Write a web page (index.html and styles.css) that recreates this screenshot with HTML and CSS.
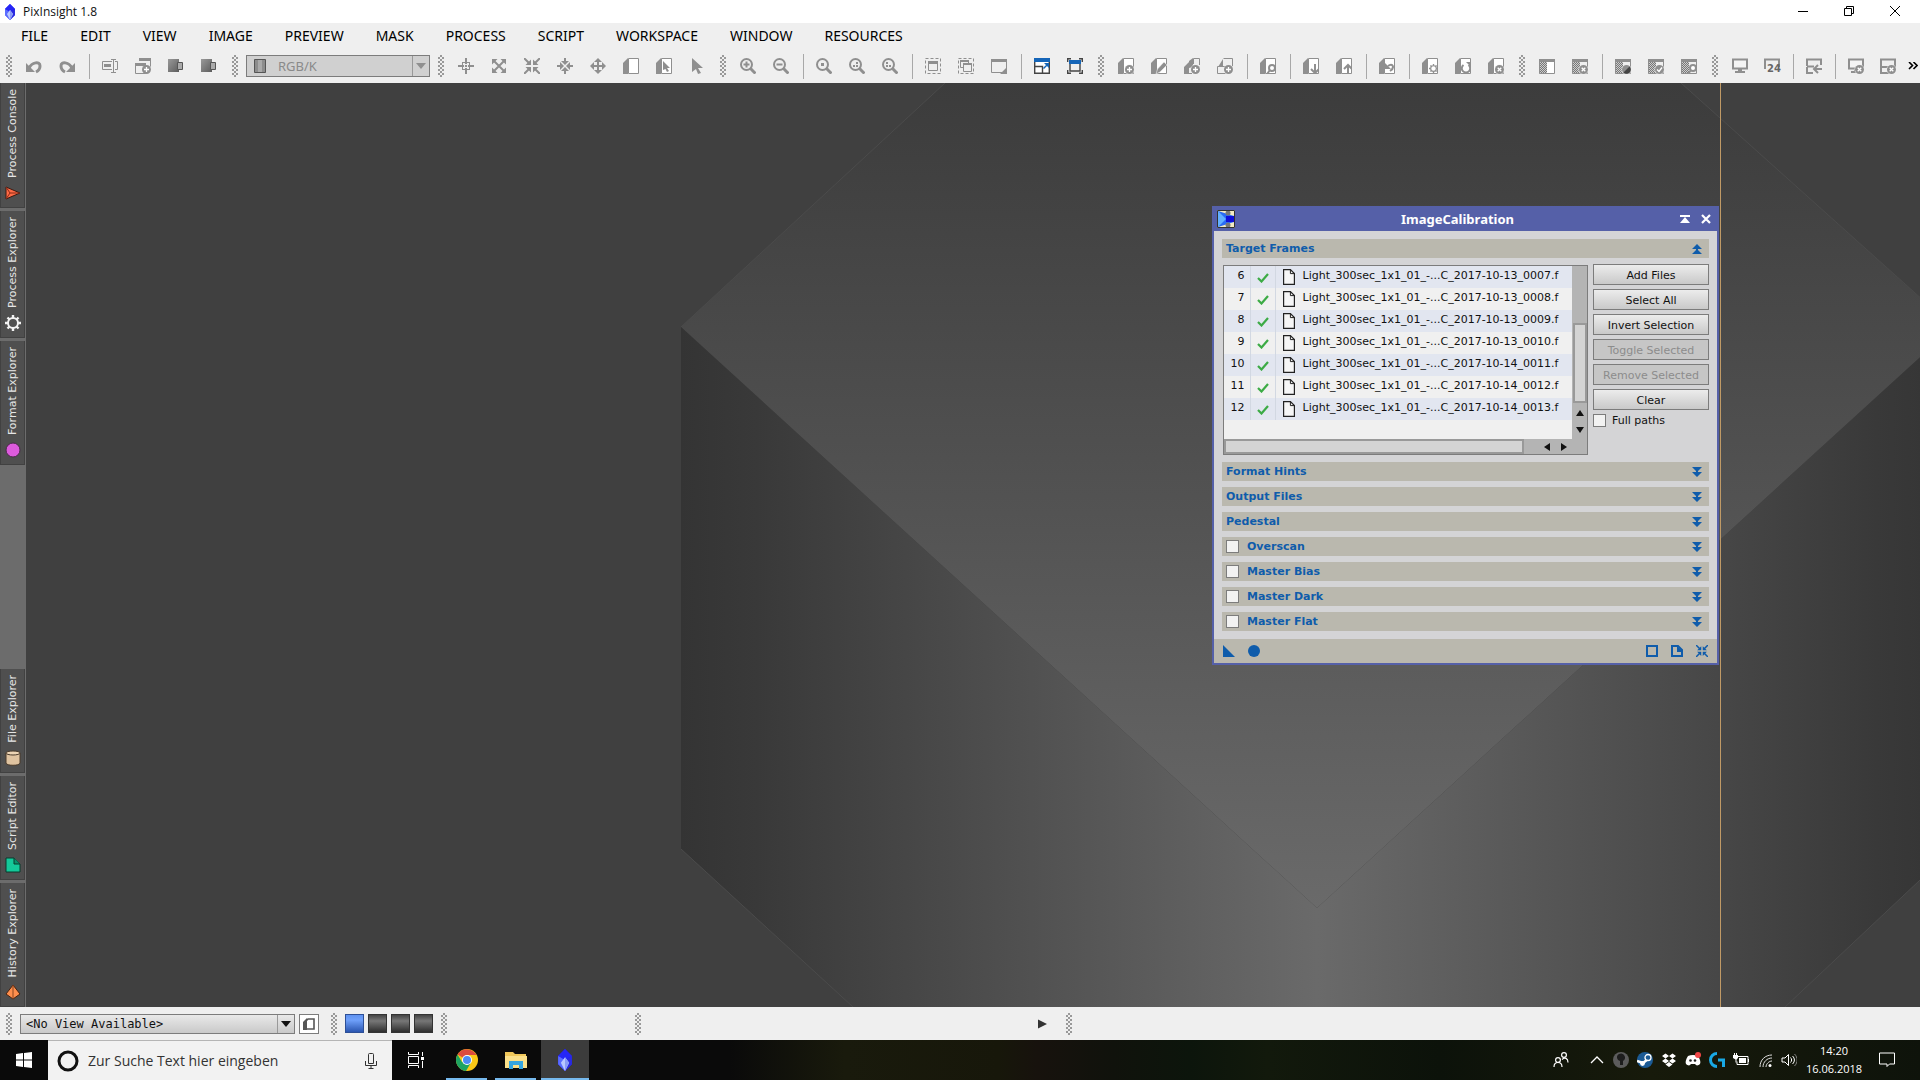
FILE: index.html
```html
<!DOCTYPE html>
<html lang="en">
<head>
  <meta charset="UTF-8" />
  <meta name="viewport" content="width=device-width, initial-scale=1.0"/>
  <title>PixInsight 1.8</title>
  <link rel="stylesheet" href="styles.css">
</head>
<body>

<!-- Icon set -->
<svg class="defs" aria-hidden="true">
  <symbol id="gem" viewBox="0 0 16 16"><path d="M8 0l5 5v6l-5 5-5-5V5z" fill="#1a1aff"/><path d="M8 0l5 5-5 3-5-3z" fill="#2626f5"/><path d="M3 5l5 3v8l-5-5z" fill="#5a6cff"/><path d="M13 5L8 8v8l5-5z" fill="#2a2ae0"/><path d="M8 6l3 4-3 6-3-6z" fill="#b9c8ff"/><path d="M8 6v10l3-6z" fill="#8a9cf5"/></symbol>
  <symbol id="undo" viewBox="0 0 16 16"><path d="M0 5v9h9z"/><path d="M3 10C6 4 14 3 14 8c0 3-2 5-4 6" class="ln3"/></symbol>
  <symbol id="redo" viewBox="0 0 16 16"><path d="M16 5v9H7z"/><path d="M13 10C10 4 2 3 2 8c0 3 2 5 4 6" class="ln3"/></symbol>
  <symbol id="rename" viewBox="0 0 16 16"><path d="M10 3.500H.5v8H10M13 3.500h2.500v8H13M9 1.500h5M9 14.500h5M11.500 1.500v13" class="ln"/><path d="M2 6h7v3H2z"/></symbol>
  <symbol id="newwin" viewBox="0 0 16 16"><path d="M4.500.5h11v8M.5 5.500h10v10H.5z" class="ln"/><path d="M4 0h12v3H4zM0 5h11v3H0z"/><circle cx="11.500" cy="11.500" r="4.500"/><path d="M11.500 9v5M9 11.500h5" class="wh"/></symbol>
  <symbol id="swap" viewBox="0 0 16 16"><path d="M0 1h11v13H0z" fill="url(#darkside)"/><path d="M9.500 4.500h5v7h-5z" fill="#aaa" stroke="#555"/></symbol>
  <symbol id="cross" viewBox="0 0 16 16"><path d="M8 0v6M8 10v6M0 8h6M10 8h6" class="ln2"/><rect x="4.500" y="4.500" width="7" height="7" class="ln"/><path d="M7 7h2v2H7z"/></symbol>
  <symbol id="expand" viewBox="0 0 16 16"><path d="M1 1h5.500L1 6.500zM15 1v5.500L9.500 1zM1 15V9.500L6.500 15zM15 15H9.500L15 9.500z"/><path d="M2 2l12 12M14 2L2 14" class="ln2"/></symbol>
  <symbol id="shrink" viewBox="0 0 16 16"><path d="M7 7H1.500L7 1.500zM9 7V1.500L14.500 7zM7 9v5.500L1.500 9zM9 9h5.500L9 14.500z"/><path d="M0 0l6 6M16 0l-6 6M0 16l6-6M16 16l-6-6" class="ln2"/></symbol>
  <symbol id="inward" viewBox="0 0 16 16"><path d="M8 7L4 3h8zM8 9l-4 4h8zM7 8L3 4v8zM9 8l4-4v8z"/><path d="M8 0v4M8 12v4M0 8h4M12 8h4" class="ln2"/></symbol>
  <symbol id="outward" viewBox="0 0 16 16"><path d="M8 0l4 4H4zM8 16l-4-4h8zM0 8l4-4v8zM16 8l-4 4V4z"/><path d="M8 3v10M3 8h10" class="ln2"/></symbol>
  <symbol id="page" viewBox="0 0 16 16"><path d="M0 16V5l5-5v16z"/><path d="M5.500.5h10v15h-10z" fill="#fff" stroke="currentColor"/></symbol>
  <symbol id="cursor" viewBox="0 0 16 16"><path d="M3 0l11 10H9l3 5-3 1-2-5-4 3z"/></symbol>
  <symbol id="pagecursor" viewBox="0 0 16 16"><use href="#page"/><path d="M7 3l7 7h-3l2 3-2 1-1.500-3L7 12z"/></symbol>
  <symbol id="lens" viewBox="0 0 16 16"><circle cx="6.500" cy="6.500" r="5.500" class="ln2"/><path d="M10.500 10.500l5 5" class="ln3"/></symbol>
  <symbol id="zoomin" viewBox="0 0 16 16"><use href="#lens"/><path d="M6.500 3.500v6M3.500 6.500h6" class="ln2"/></symbol>
  <symbol id="zoomout" viewBox="0 0 16 16"><use href="#lens"/><path d="M3.500 6.500h6" class="ln2"/></symbol>
  <symbol id="zoom1" viewBox="0 0 16 16"><use href="#lens"/><path d="M5 5h3v3H5z"/></symbol>
  <symbol id="zoom2" viewBox="0 0 16 16"><use href="#lens"/><path d="M7 4h2v2H7zM4 7h2v2H4zM7 7h2v2H7z"/></symbol>
  <symbol id="zoom3" viewBox="0 0 16 16"><use href="#lens"/><path d="M4 4h2v2H4zM4 7h2v2H4zM7 7h2v2H7z"/></symbol>
  <symbol id="selwin" viewBox="0 0 16 16"><rect x=".5" y=".5" width="15" height="15" class="dash"/><path d="M3.500 4.500h9v8h-9z" class="ln"/><path d="M3 3h10v3H3z"/></symbol>
  <symbol id="selwins" viewBox="0 0 16 16"><rect x=".5" y=".5" width="15" height="15" class="dash"/><path d="M10.500 5V2.500h-8v7H5M5.500 5.500h8v8h-8z" class="ln"/><path d="M2 2h9v2H2zM5 5h9v2H5z"/></symbol>
  <symbol id="winarrow" viewBox="0 0 16 16"><path d="M.5 1.500h15v13H.5z" class="ln"/><path d="M0 1h16v3H0zM16 9v7H9z"/></symbol>
  <symbol id="fitwin" viewBox="0 0 16 16"><path d="M.7 1h14.600v14.300H.7zM1 8.500h7.500V15" fill="#fff" stroke="#444" stroke-width="1.400"/><path d="M0 0h16v4H0zM10 5h5v5zM9 10l4-4 1 1-4 4z" fill="#1565b8"/></symbol>
  <symbol id="fitscreen" viewBox="0 0 16 16"><path d="M.7 4V.7H4M12 .7h3.300V4M.7 12v3.300H4M12 15.300h3.300V12M3 3h10v10H3z" fill="none" stroke="#444" stroke-width="1.400"/><path d="M2 2h12v4H2z" fill="#1565b8"/></symbol>
  <symbol id="badge" viewBox="0 0 16 16"><circle cx="11.500" cy="11.500" r="5" fill="#efefef"/><circle cx="11.500" cy="11.500" r="4.500"/></symbol>
  <symbol id="pageadd" viewBox="0 0 16 16"><use href="#page"/><use href="#badge"/><path d="M11.500 9v5M9 11.500h5" class="wh"/></symbol>
  <symbol id="pageedit" viewBox="0 0 16 16"><use href="#page"/><path d="M5 16l1.500-5L13 4l3 3-7 7z" stroke="#efefef" stroke-width=".6"/></symbol>
  <symbol id="pagesadd" viewBox="0 0 16 16"><path d="M0 16V9l5-5v12zM5 10V3l4-3v9z"/><path d="M15.500 7V.5h-6V6M5 15.500h3" class="ln"/><use href="#badge"/><path d="M11.500 9v5M9 11.500h5" class="wh"/></symbol>
  <symbol id="stackadd" viewBox="0 0 16 16"><path d="M1 9l5-8v8z"/><path d="M6.500.5h9V8M.5 8.500h8v7h-8z" class="ln"/><use href="#badge"/><path d="M11.500 9v5M9 11.500h5" class="wh"/></symbol>
  <symbol id="pagefind" viewBox="0 0 16 16"><use href="#page"/><circle cx="12" cy="10" r="3" fill="#fff" stroke="currentColor" stroke-width="2"/><path d="M10 12l-3 4" class="ln2"/></symbol>
  <symbol id="pagedown" viewBox="0 0 16 16"><use href="#page"/><path d="M12 6v9M8 11l4 4 4-4" class="ln2"/></symbol>
  <symbol id="pageup" viewBox="0 0 16 16"><use href="#page"/><path d="M12 16V7M8 11l4-4 4 4" class="ln2"/></symbol>
  <symbol id="pageundo" viewBox="0 0 16 16"><use href="#page"/><path d="M9 8c5-4 7 2 2 5" class="ln2"/><path d="M6 5v6h6z"/></symbol>
  <symbol id="gear" viewBox="0 0 16 16"><circle cx="8" cy="8" r="5" fill="none" stroke="currentColor" stroke-width="2"/><path d="M8 0v3M8 13v3M0 8h3M13 8h3M2.500 2.500l2 2M11.500 11.500l2 2M13.500 2.500l-2 2M4.500 11.500l-2 2" stroke="currentColor" stroke-width="2.400"/></symbol>
  <symbol id="pagegear" viewBox="0 0 16 16"><use href="#page"/><use href="#gear" x="7" y="6" width="9" height="9"/></symbol>
  <symbol id="pagereload" viewBox="0 0 16 16"><use href="#page"/><path d="M8.500 7a4.200 4.200 0 1 0 5 0" class="ln2"/><path d="M11 4h5v5z"/></symbol>
  <symbol id="pagedel" viewBox="0 0 16 16"><use href="#page"/><use href="#badge"/><path d="M9.700 9.700l3.600 3.600M13.300 9.700l-3.600 3.600" class="wh"/></symbol>
  <symbol id="mask" viewBox="0 0 16 16"><path d="M0 1h16v3H0z"/><path d="M0 4h8v12H0z" fill="url(#checks)"/><path d="M.5 1.500h15v14H.5z" class="ln"/></symbol>
  <symbol id="maskhalf" viewBox="0 0 16 16"><path d="M1 4h14v11H1z" fill="#fff"/><use href="#mask"/></symbol>
  <symbol id="maskdel" viewBox="0 0 16 16"><use href="#mask"/><use href="#badge"/><path d="M9.700 9.700l3.600 3.600M13.300 9.700l-3.600 3.600" class="wh"/></symbol>
  <symbol id="maskinv" viewBox="0 0 16 16"><use href="#mask"/><use href="#badge"/><path d="M8.500 14.500l6-6a4.200 4.200 0 0 1-6 6z" fill="#444"/></symbol>
  <symbol id="maskok" viewBox="0 0 16 16"><use href="#mask"/><use href="#badge"/><path d="M9 11.500l2 2 3-4" class="wh"/></symbol>
  <symbol id="maskfind" viewBox="0 0 16 16"><use href="#mask"/><circle cx="12" cy="10" r="3" fill="#fff" stroke="currentColor" stroke-width="2"/><path d="M10 12l-3 4" class="ln2"/></symbol>
  <symbol id="screen" viewBox="0 0 16 16"><path d="M1 1.500h14v9H1z" fill="#f4f4f4" stroke="currentColor" stroke-width="2"/><path d="M6 11h4v3H6zM3 13h10v2H3z"/></symbol>
  <symbol id="scrback" viewBox="0 0 16 16"><path d="M1 8V1.500h14V7M1 8.500h7M1 9v6h6M16 11H9M12 7l-4 4 4 4" class="ln2"/></symbol>
  <symbol id="scrdel" viewBox="0 0 16 16"><use href="#screen"/><use href="#badge"/><path d="M9.700 9.700l3.600 3.600M13.300 9.700l-3.600 3.600" class="wh"/></symbol>
  <symbol id="windel" viewBox="0 0 16 16"><path d="M1 8V1.500h14V9M1 9h7v6H1z" class="ln2"/><use href="#badge"/><path d="M9.700 9.700l3.600 3.600M13.300 9.700l-3.600 3.600" class="wh"/></symbol>
  <symbol id="down2" viewBox="0 0 10 10"><path d="M0 0h10L5 5zM0 5h10l-5 5z"/><path d="M4 4h2v2H4z"/></symbol>
  <symbol id="up2" viewBox="0 0 10 10"><path d="M0 5h10L5 0zM0 10h10L5 5z"/><path d="M4 4h2v2H4z"/></symbol>
  <symbol id="tick" viewBox="0 0 12 10"><path d="M1 5l3.500 3.500L11 1" fill="none" stroke="#3cab45" stroke-width="2.200"/></symbol>
  <symbol id="file" viewBox="0 0 12 16"><path d="M.6.600h6.800l4 4v10.800H.6z" fill="#f6f6f6" stroke="#222" stroke-width="1.200"/><path d="M7.400.6v4h4" fill="none" stroke="#222"/></symbol>
  <linearGradient id="darkside" x1="0" y1="0" x2="1" y2="1"><stop offset="0" stop-color="#9a9a9a"/><stop offset="1" stop-color="#5c5c5c"/></linearGradient>
  <pattern id="checks" width="2" height="2" patternUnits="userSpaceOnUse"><path d="M0 0h2v2H0z" fill="#ccc"/><path d="M0 0h1v1H0zM1 1h1v1H1z" fill="#777"/></pattern>
</svg>

<header class="titlebar">
  <svg class="app-icon"><use href="#gem"/></svg>
  <h1>PixInsight 1.8</h1>
  <div class="window-buttons">
    <button aria-label="Minimize"><svg viewBox="0 0 10 10"><path d="M0 5.500h10"/></svg></button>
    <button aria-label="Restore"><svg viewBox="0 0 10 10"><path d="M.5 2.500h7v7h-7zM2.500 2V.5h7v7H8"/></svg></button>
    <button aria-label="Close"><svg viewBox="0 0 10 10"><path d="M0 0l10 10M10 0L0 10"/></svg></button>
  </div>
</header>

<nav class="menu">
  <a href="#">FILE</a>
  <a href="#">EDIT</a>
  <a href="#">VIEW</a>
  <a href="#">IMAGE</a>
  <a href="#">PREVIEW</a>
  <a href="#">MASK</a>
  <a href="#">PROCESS</a>
  <a href="#">SCRIPT</a>
  <a href="#">WORKSPACE</a>
  <a href="#">WINDOW</a>
  <a href="#">RESOURCES</a>
</nav>

<div class="toolbar">
  <i class="grip"></i>
  <button aria-label="Undo"><svg><use href="#undo"/></svg></button>
  <button aria-label="Redo"><svg><use href="#redo"/></svg></button>
  <i class="sep"></i>
  <button aria-label="Rename"><svg><use href="#rename"/></svg></button>
  <button aria-label="Duplicate"><svg><use href="#newwin"/></svg></button>
  <button aria-label="Previous channel"><svg><use href="#swap"/></svg></button>
  <button aria-label="Next channel"><svg><use href="#swap"/></svg></button>
  <i class="grip"></i>
  <div class="combo channel">
    <svg class="channel-icon" viewBox="0 0 12 14"><path d="M.5.500h11v13H.5z" fill="#8d8d8d" stroke="#555"/><path d="M4 1h4v12H4z" fill="#aaa"/></svg>
    <select aria-label="Channel" disabled><option>RGB/K</option></select>
    <svg class="combo-arrow" viewBox="0 0 10 6"><path d="M0 0h10L5 6z"/></svg>
  </div>
  <i class="grip"></i>
  <button aria-label="Readout"><svg><use href="#cross"/></svg></button>
  <button aria-label="Expand"><svg><use href="#expand"/></svg></button>
  <button aria-label="Shrink"><svg><use href="#shrink"/></svg></button>
  <button aria-label="Center"><svg><use href="#inward"/></svg></button>
  <button aria-label="Pan"><svg><use href="#outward"/></svg></button>
  <button aria-label="New preview"><svg><use href="#page"/></svg></button>
  <button aria-label="Edit preview"><svg><use href="#pagecursor"/></svg></button>
  <button aria-label="Pointer"><svg><use href="#cursor"/></svg></button>
  <i class="grip"></i>
  <button aria-label="Zoom in"><svg><use href="#zoomin"/></svg></button>
  <button aria-label="Zoom out"><svg><use href="#zoomout"/></svg></button>
  <i class="sep"></i>
  <button aria-label="Zoom 1:1"><svg><use href="#zoom1"/></svg></button>
  <button aria-label="Zoom 1:2"><svg><use href="#zoom2"/></svg></button>
  <button aria-label="Zoom 1:3"><svg><use href="#zoom3"/></svg></button>
  <i class="sep"></i>
  <button aria-label="Fit view"><svg><use href="#selwin"/></svg></button>
  <button aria-label="Fit all"><svg><use href="#selwins"/></svg></button>
  <button aria-label="Optimal fit"><svg><use href="#winarrow"/></svg></button>
  <i class="sep"></i>
  <button aria-label="Maximize"><svg><use href="#fitwin"/></svg></button>
  <button aria-label="Full screen"><svg><use href="#fitscreen"/></svg></button>
  <i class="grip"></i>
  <button aria-label="Add preview"><svg><use href="#pageadd"/></svg></button>
  <button aria-label="Modify preview"><svg><use href="#pageedit"/></svg></button>
  <button aria-label="Clone preview"><svg><use href="#pagesadd"/></svg></button>
  <button aria-label="Stack preview"><svg><use href="#stackadd"/></svg></button>
  <i class="sep"></i>
  <button aria-label="Find preview"><svg><use href="#pagefind"/></svg></button>
  <i class="sep"></i>
  <button aria-label="Store preview"><svg><use href="#pagedown"/></svg></button>
  <button aria-label="Restore preview"><svg><use href="#pageup"/></svg></button>
  <i class="sep"></i>
  <button aria-label="Undo preview"><svg><use href="#pageundo"/></svg></button>
  <i class="sep"></i>
  <button aria-label="Preview settings"><svg><use href="#pagegear"/></svg></button>
  <button aria-label="Reset preview"><svg><use href="#pagereload"/></svg></button>
  <button aria-label="Delete preview"><svg><use href="#pagedel"/></svg></button>
  <i class="grip"></i>
  <button aria-label="Select mask"><svg><use href="#maskhalf"/></svg></button>
  <button aria-label="Remove mask"><svg><use href="#maskdel"/></svg></button>
  <i class="sep"></i>
  <button aria-label="Invert mask"><svg><use href="#maskinv"/></svg></button>
  <button aria-label="Enable mask"><svg><use href="#maskok"/></svg></button>
  <button aria-label="Show mask"><svg><use href="#maskfind"/></svg></button>
  <i class="grip"></i>
  <span class="tight">
    <button aria-label="Screen"><svg><use href="#screen"/></svg></button>
    <button class="lut" aria-label="24-bit screen"><svg viewBox="0 0 16 16"><path d="M1 11V1.500h14V9" class="ln2"/></svg><b>24</b></button>
    <i class="sep"></i>
    <button aria-label="Screen transfer"><svg><use href="#scrback"/></svg></button>
    <i class="sep"></i>
    <button aria-label="Reset screen"><svg><use href="#scrdel"/></svg></button>
    <button aria-label="Reset all screens"><svg><use href="#windel"/></svg></button>
  </span>
  <button class="more" aria-label="More"><svg viewBox="0 0 10 8"><path d="M1 0l3.500 3.500L1 7M5.500 0L9 3.500 5.500 7" fill="none" stroke="#000" stroke-width="1.600"/></svg></button>
</div>

<main>
  <aside class="sidebar">
    <button class="tab"><span>Process Console</span><svg viewBox="0 0 16 16"><path d="M1 2l14 6-14 6z" fill="#ff6a45" stroke="#3a1a12"/><path d="M1 2l4 6-4 6M5 8h10" fill="none" stroke="#8a2a18"/></svg></button>
    <button class="tab"><span>Process Explorer</span><svg class="white"><use href="#gear"/></svg></button>
    <button class="tab"><span>Format Explorer</span><svg viewBox="0 0 16 16"><circle cx="8" cy="8" r="7" fill="#dd5bdd" stroke="#4a2a4a"/></svg></button>
    <div class="spare"></div>
    <button class="tab"><span>File Explorer</span><svg viewBox="0 0 16 16"><path d="M1 3v10c0 3 14 3 14 0V3" fill="#dfc3a0" stroke="#4a3a2a"/><ellipse cx="8" cy="3" rx="7" ry="2" fill="#ecd4b4" stroke="#4a3a2a"/></svg></button>
    <button class="tab"><span>Script Editor</span><svg viewBox="0 0 16 16"><path d="M1 1h8l6 6v8H1z" fill="#14c99a" stroke="#083a2c"/><path d="M9 1v6h6" fill="#0a8f6c" stroke="#083a2c"/></svg></button>
    <button class="tab"><span>History Explorer</span><svg viewBox="0 0 16 16"><path d="M8 1l7 9-7 5-7-5z" fill="#ff8f4d" stroke="#4a2410"/><path d="M8 1v14" stroke="#8a4420"/></svg></button>
  </aside>

  <section class="workspace">
    <svg class="cube" viewBox="0 0 1894 924" preserveAspectRatio="xMidYMid slice" aria-hidden="true">
      <defs>
        <linearGradient id="top" gradientUnits="userSpaceOnUse" x1="0" y1="0" x2="0" y2="825"><stop offset="0" stop-color="#3c3c3c"/><stop offset=".5" stop-color="#525252"/><stop offset="1" stop-color="#6a6a6a"/></linearGradient>
        <linearGradient id="left" gradientUnits="userSpaceOnUse" x1="655" y1="0" x2="1291" y2="0"><stop offset="0" stop-color="#343434"/><stop offset=".12" stop-color="#393939"/><stop offset="1" stop-color="#6a6a6a"/></linearGradient>
        <linearGradient id="right" gradientUnits="userSpaceOnUse" x1="1291" y1="0" x2="1927" y2="0"><stop offset="0" stop-color="#6a6a6a"/><stop offset=".88" stop-color="#393939"/><stop offset="1" stop-color="#343434"/></linearGradient>
      </defs>
      <path d="M655 244L919 0h736l272 244-636 581z" fill="url(#top)"/>
      <path d="M655 244l636 581v99H827L655 766z" fill="url(#left)"/>
      <path d="M1927 244l-636 581v99h468l168-158z" fill="url(#right)"/>
      <path d="M655 244L919 0M1655 0l272 244M655 766l172 158M1927 766l-168 158" fill="none" stroke="#4b4b4b"/>
    </svg>
    <div class="guide"></div>

    <div class="dialog" role="dialog" aria-labelledby="dialogTitle">
      <div class="dialog-title">
        <svg class="process-icon" viewBox="0 0 18 18"><path d="M0 0h18v18H0z" fill="#f3ecc4"/><path d="M1 1l16 5v6L1 17z" fill="#2a6cf5"/><path d="M1 1l8 8-8 8z" fill="#62b0ff"/><path d="M9 6h8v6H9z" fill="#0f0fd8"/><circle cx="11" cy="3" r="2.500" fill="#777"/><circle cx="11" cy="15" r="2.500" fill="#777"/><path d="M.5.500h17v17H.5z" fill="none" stroke="#333"/></svg>
        <h2 id="dialogTitle">ImageCalibration</h2>
        <button aria-label="Shade"><svg viewBox="0 0 10 10"><path d="M0 1h10v2H0zM5 3l5 6H0z" fill="#fff"/></svg></button>
        <button aria-label="Close dialog"><svg viewBox="0 0 10 10"><path d="M1 1l8 8M9 1L1 9" stroke="#fff" stroke-width="2.200"/></svg></button>
      </div>

      <div class="dialog-body">
        <h3 class="section">Target Frames <svg><use href="#up2"/></svg></h3>
        <div class="target">
          <div class="list">
            <div class="list-view">
              <table>
                <tr><td>6</td><td><svg><use href="#tick"/></svg></td><td><svg><use href="#file"/></svg>Light_300sec_1x1_01_-...C_2017-10-13_0007.f</td></tr>
                <tr><td>7</td><td><svg><use href="#tick"/></svg></td><td><svg><use href="#file"/></svg>Light_300sec_1x1_01_-...C_2017-10-13_0008.f</td></tr>
                <tr><td>8</td><td><svg><use href="#tick"/></svg></td><td><svg><use href="#file"/></svg>Light_300sec_1x1_01_-...C_2017-10-13_0009.f</td></tr>
                <tr><td>9</td><td><svg><use href="#tick"/></svg></td><td><svg><use href="#file"/></svg>Light_300sec_1x1_01_-...C_2017-10-13_0010.f</td></tr>
                <tr><td>10</td><td><svg><use href="#tick"/></svg></td><td><svg><use href="#file"/></svg>Light_300sec_1x1_01_-...C_2017-10-14_0011.f</td></tr>
                <tr><td>11</td><td><svg><use href="#tick"/></svg></td><td><svg><use href="#file"/></svg>Light_300sec_1x1_01_-...C_2017-10-14_0012.f</td></tr>
                <tr><td>12</td><td><svg><use href="#tick"/></svg></td><td><svg><use href="#file"/></svg>Light_300sec_1x1_01_-...C_2017-10-14_0013.f</td></tr>
              </table>
            </div>
            <div class="vscroll">
              <div class="thumb"></div>
              <svg viewBox="0 0 8 6"><path d="M0 6h8L4 0z"/></svg>
              <svg viewBox="0 0 8 6"><path d="M0 0h8L4 6z"/></svg>
            </div>
            <div class="hscroll">
              <div class="thumb"></div>
              <svg viewBox="0 0 6 8"><path d="M6 0v8L0 4z"/></svg>
              <svg viewBox="0 0 6 8"><path d="M0 0v8l6-4z"/></svg>
            </div>
          </div>
          <div class="actions">
            <button>Add Files</button>
            <button>Select All</button>
            <button>Invert Selection</button>
            <button disabled>Toggle Selected</button>
            <button disabled>Remove Selected</button>
            <button>Clear</button>
            <label><input type="checkbox"> Full paths</label>
          </div>
        </div>
        <h3 class="section">Format Hints <svg><use href="#down2"/></svg></h3>
        <h3 class="section">Output Files <svg><use href="#down2"/></svg></h3>
        <h3 class="section">Pedestal <svg><use href="#down2"/></svg></h3>
        <h3 class="section"><label><input type="checkbox"> Overscan</label> <svg><use href="#down2"/></svg></h3>
        <h3 class="section"><label><input type="checkbox"> Master Bias</label> <svg><use href="#down2"/></svg></h3>
        <h3 class="section"><label><input type="checkbox"> Master Dark</label> <svg><use href="#down2"/></svg></h3>
        <h3 class="section"><label><input type="checkbox"> Master Flat</label> <svg><use href="#down2"/></svg></h3>
      </div>

      <div class="dialog-foot">
        <button aria-label="New instance"><svg viewBox="0 0 12 12"><path d="M0 0v12h12z"/></svg></button>
        <button aria-label="Apply global"><svg viewBox="0 0 12 12"><circle cx="6" cy="6" r="6"/></svg></button>
        <span class="fill"></span>
        <button aria-label="Edit instance"><svg viewBox="0 0 12 12"><path d="M1 1h10v10H1z" class="ln2"/></svg></button>
        <button aria-label="Documentation"><svg viewBox="0 0 12 12"><path d="M1 1h6l4 4v6H1z" class="ln2"/><path d="M6 1v6h6z"/></svg></button>
        <button aria-label="Reset"><svg><use href="#shrink"/></svg></button>
      </div>
    </div>
  </section>
</main>

<footer class="statusbar">
  <i class="grip"></i>
  <div class="combo view">
    <select aria-label="View"><option>&lt;No View Available&gt;</option></select>
    <svg class="combo-arrow" viewBox="0 0 10 6"><path d="M0 0h10L5 6z"/></svg>
  </div>
  <button class="view-button" aria-label="Preview"><svg viewBox="0 0 12 12"><path d="M1 11V5l4-4h6v10z" fill="none" stroke="#555" stroke-width="1.600"/><path d="M0 12V4l4-4v12z" fill="#555"/></svg></button>
  <i class="grip"></i>
  <div class="spaces">
    <button class="active" aria-label="Workspace 1"></button>
    <button aria-label="Workspace 2"></button>
    <button aria-label="Workspace 3"></button>
    <button aria-label="Workspace 4"></button>
  </div>
  <i class="grip"></i>
  <span class="info"></span>
  <i class="grip"></i>
  <span class="message"><svg viewBox="0 0 10 10"><path d="M0 0l10 5-10 5z"/></svg></span>
  <i class="grip"></i>
</footer>

<div class="taskbar">
  <button class="start" aria-label="Start"><svg viewBox="0 0 16 16"><path d="M0 2l7-1v6.500H0zM8 1l8-1v7.500H8zM0 8.500h7V15l-7-1zM8 8.500h8V16l-8-1z" fill="#fff"/></svg></button>
  <div class="search">
    <svg class="cortana" viewBox="0 0 22 22"><circle cx="11" cy="11" r="9" fill="none" stroke="#111" stroke-width="3"/></svg>
    <input type="text" aria-label="Suche" placeholder="Zur Suche Text hier eingeben">
    <svg class="mic" viewBox="0 0 12 16"><path d="M3.500 1.500a1 1 0 0 1 1-1h3a1 1 0 0 1 1 1v9h-5zM.5 8v4.500h11V8M6 12.500v3M3.500 15.500h5" fill="none" stroke="#333"/></svg>
  </div>
  <button class="task" aria-label="Task view"><svg viewBox="0 0 16 16"><path d="M.5 0v2.500h10V0M.5 16v-2.500h10V16M.5 4.500h10v7H.5zM14.500 0v4M14.500 9v7" fill="none" stroke="#fff"/><path d="M13 5h3v3h-3z" fill="#fff"/></svg></button>
  <button class="task app" aria-label="Chrome"><svg viewBox="0 0 22 22"><circle cx="11" cy="11" r="11" fill="#fbc816"/><path d="M11 11L1.500 5.500A11 11 0 0 1 20.500 6H11z" fill="#dd4b3e"/><path d="M1.500 5.500A11 11 0 0 0 10 22l5-8.500L11 11l-5 2z" fill="#1da462"/><circle cx="11" cy="11" r="5" fill="#fff"/><circle cx="11" cy="11" r="4" fill="#4c8bf5"/></svg></button>
  <button class="task app" aria-label="Explorer"><svg viewBox="0 0 22 20"><path d="M0 2h8l2 2h11v14H0z" fill="#f0c75a"/><path d="M0 6h22v12H0z" fill="#fbe08a"/><path d="M4 19v-8h14v8h-4v-4H8v4z" fill="#35a5e0"/></svg></button>
  <button class="task app current" aria-label="PixInsight"><svg><use href="#gem"/></svg></button>
  <div class="tray">
    <svg class="people" viewBox="0 0 16 16"><g fill="none" stroke="#fff" stroke-width="1.200"><circle cx="5" cy="8" r="2.400"/><path d="M1 15c0-6 8-6 8 0"/><circle cx="11" cy="3" r="2.400"/><path d="M9 7.500c3-3 6-1 6 3"/></g></svg>
    <svg viewBox="0 0 16 16"><path d="M2 11l6-6 6 6" fill="none" stroke="#fff" stroke-width="1.300"/></svg>
    <svg viewBox="0 0 16 16"><circle cx="8" cy="8" r="8" fill="#5c5c5c"/><path d="M4 6a4 4 0 1 1 6 3v4H7V9a4 4 0 0 1-3-3z" fill="#1d1d1d"/></svg>
    <svg viewBox="0 0 16 16"><circle cx="8" cy="8" r="8" fill="#1b5a94"/><path d="M0 9l6 2 5-4" stroke="#fff" stroke-width="2.500" fill="none"/><circle cx="5.500" cy="11.500" r="2.400" fill="#fff"/><circle cx="11" cy="5.500" r="3" fill="#1b5a94" stroke="#fff" stroke-width="1.300"/></svg>
    <svg viewBox="0 0 16 16"><path d="M4.500 1.500l3.500 2.500-3.500 2.500L1 4zM11.500 1.500L15 4l-3.500 2.500L8 4zM4.500 6.500L8 9l-3.500 2.500L1 9zM11.500 6.500L15 9l-3.500 2.500L8 9zM8 10l3.500 2.500L8 15l-3.500-2.500z" fill="#fff"/></svg>
    <svg viewBox="0 0 16 16"><path d="M3 4c3-1.500 7-1.500 10 0 2 3 3 6 2 8-1 1-3 2-4 1l-1-1H6l-1 1c-1 1-3 0-4-1-1-2 0-5 2-8z" fill="#fff"/><circle cx="5.500" cy="8.500" r="1.300" fill="#222"/><circle cx="10" cy="8.500" r="1.300" fill="#222"/><circle cx="13" cy="3" r="3" fill="#f04747"/></svg>
    <svg viewBox="0 0 16 16"><path d="M8 1.500a6.500 6.500 0 1 0 0 13M9 8h5.500v7" fill="none" stroke="#19a9e5" stroke-width="3"/></svg>
    <svg viewBox="0 0 16 16"><path d="M4 4.500h11v8H4v-3" fill="none" stroke="#fff"/><path d="M6 6h7v5H6zM15 7h1v3h-1zM0 3h5v3L3.500 7.500v3h-1v-3L0 6zM1 1h1v2H1zM3 1h1v2H3z" fill="#fff"/></svg>
    <svg viewBox="0 0 16 16"><path d="M3 15C3 8 8 3 15 3M6 15c0-5 4-9 9-9M9 15c0-3 3-6 6-6" fill="none" stroke="#ddd"/><circle cx="13" cy="13.500" r="1.500" fill="#fff"/></svg>
    <svg viewBox="0 0 16 16"><path d="M1 6h3l3.500-3.500v11L4 10H1z" fill="none" stroke="#fff"/><path d="M9.500 5.500c1.500 1.500 1.500 3.500 0 5M11.500 4c2.500 2.500 2.500 5.500 0 8" fill="none" stroke="#fff"/><path d="M13.500 2c3.500 3.500 3.500 8.500 0 12" fill="none" stroke="#888"/></svg>
    <div class="clock"><span>14:20</span><span>16.06.2018</span></div>
    <svg class="notes" viewBox="0 0 16 16"><path d="M.5 1h15v11h-5L8 14.500V12H.5z" fill="none" stroke="#fff"/></svg>
  </div>
</div>

</body>
</html>
```
FILE: styles.css
```css
:root {
  --panel: #efefef;
  --icon: #8f8f8f;
  --blue: #0f5cab;
  --section: #bab8ae;
}

* {
  box-sizing: border-box;
}

body {
  margin: 0;
  height: 100vh;
  display: flex;
  flex-direction: column;
  overflow: hidden;
  font-family: "DejaVu Sans", Verdana, sans-serif;
  font-size: 11px;
  color: #111;
  background: #404040;
}

button {
  padding: 0;
  border: none;
  background: none;
  font: inherit;
  color: inherit;
}

svg {
  display: block;
  flex: none;
  fill: currentColor;
}

h1, h2, h3 {
  margin: 0;
  font-size: inherit;
}

.defs {
  position: absolute;
  width: 0;
  height: 0;
}

.ln, .ln2, .ln3, .dash {
  fill: none;
  stroke: currentColor;
}

.ln2 { stroke-width: 2; }
.ln3 { stroke-width: 3; }
.dash { stroke-dasharray: 3 2; }
.wh { fill: none; stroke: #fff; stroke-width: 1.3; }

/* Title bar and menu */
.titlebar {
  display: flex;
  align-items: center;
  height: 23px;
  flex: none;
  background: #fff;
}

.app-icon {
  width: 16px;
  height: 16px;
  margin: 0 5px 0 2px;
}

.titlebar h1 {
  flex: 1;
  font: 12px "Open Sans", sans-serif;
}

.window-buttons {
  display: flex;
  padding: 0 2px 2px 0;
}

.window-buttons button {
  width: 46px;
  display: flex;
  justify-content: center;
}

.window-buttons svg {
  width: 10px;
  height: 10px;
  fill: none;
  stroke: #000;
}

.menu {
  display: flex;
  align-items: center;
  gap: 32px;
  height: 27px;
  flex: none;
  padding: 0 0 2px 21px;
  background: var(--panel);
}

.menu a {
  color: #000;
  text-decoration: none;
  font: 14px "Noto Sans", sans-serif;
}

/* Toolbar */
.toolbar {
  display: flex;
  align-items: center;
  height: 33px;
  flex: none;
  padding-bottom: 1px;
  overflow: hidden;
  background: var(--panel);
  color: var(--icon);
}

.toolbar button {
  width: 33px;
  flex: none;
  display: flex;
  justify-content: center;
  padding-right: 1px;
}

.toolbar button svg {
  width: 16px;
  height: 16px;
}

.grip {
  width: 18px;
  height: 22px;
  flex: none;
  background: repeating-conic-gradient(#999 0 25%, transparent 0 50%) 0 0 / 4px 4px content-box;
  padding: 0 6px;
}

.sep {
  width: 10px;
  height: 25px;
  flex: none;
  background: linear-gradient(#a8a8a8, #a8a8a8) center / 1px 100% no-repeat;
}

.tight {
  display: flex;
  align-items: center;
}

.toolbar .tight button {
  width: 32px;
}

.lut {
  position: relative;
}

.lut b {
  position: absolute;
  right: 7px;
  bottom: 0;
  font-size: 10px;
  line-height: 10px;
  color: #666;
}

.toolbar .more {
  width: 14px;
  margin-left: auto;
}

.toolbar .more svg {
  width: 10px;
  height: 8px;
}

.combo {
  position: relative;
  display: flex;
  align-items: center;
}

.combo select {
  width: 100%;
  height: 100%;
  appearance: none;
  border: 1px solid #7c7c7c;
  border-radius: 0;
  background: linear-gradient(90deg, transparent calc(100% - 17px), #999 calc(100% - 17px), #999 calc(100% - 16px), transparent calc(100% - 16px)), linear-gradient(#e9e9e9, #c9c9c9);
}

.combo-arrow {
  position: absolute;
  right: 4px;
  width: 10px;
  height: 6px;
}

.channel {
  width: 184px;
  height: 22px;
  margin: 0 2px;
}

.channel select {
  padding-left: 31px;
  background-color: #d0d0d0;
  background-image: linear-gradient(90deg, transparent calc(100% - 17px), #999 calc(100% - 17px), #999 calc(100% - 16px), transparent calc(100% - 16px));
  color: #8a8a8a;
  opacity: 1;
  font: 13px "Noto Sans", sans-serif;
}

.channel-icon {
  position: absolute;
  left: 8px;
  width: 12px;
  height: 14px;
}

/* Docked explorers */
main {
  flex: 1;
  display: flex;
  min-height: 0;
}

.sidebar {
  width: 26px;
  flex: none;
  display: flex;
  flex-direction: column;
  background: #6c6c6c;
}

.tab {
  display: flex;
  flex-direction: column;
  align-items: center;
  gap: 7px;
  padding: 6px 0;
  margin: 0 1px 3px 0;
  background: #4f4f4f;
  border: 1px solid #414141;
  border-top: none;
  color: #e6e6e6;
}

.tab span {
  writing-mode: vertical-rl;
  transform: rotate(180deg);
}

.tab svg {
  width: 16px;
  height: 16px;
}

.tab .white {
  color: #f2f2f2;
}

.tab:last-child {
  margin-bottom: 0;
}

.spare {
  flex: 1;
}

/* Workspace */
.workspace {
  position: relative;
  flex: 1;
  overflow: hidden;
  background: #404040;
}

.cube {
  width: 100%;
  height: 100%;
}

.guide {
  position: absolute;
  top: 0;
  bottom: 0;
  right: 199px;
  width: 1px;
  background: #c09a66;
}

.dialog {
  position: absolute;
  top: 123px;
  right: 201px;
  width: 507px;
  border: 2px solid #5560a8;
  background: #d4d4d6;
}

.dialog-title {
  display: flex;
  align-items: center;
  gap: 11px;
  height: 23px;
  padding: 0 6px 2px 3px;
  background: #5560a8;
  color: #fff;
}

.dialog-title h2 {
  flex: 1;
  text-align: center;
  font: bold 13px "Noto Sans", sans-serif;
}

.process-icon {
  width: 18px;
  height: 18px;
}

.dialog-title button svg {
  width: 10px;
  height: 10px;
}

.dialog-body {
  display: flex;
  flex-direction: column;
  gap: 6px;
  padding: 8px;
}

.section {
  display: flex;
  align-items: center;
  justify-content: space-between;
  height: 19px;
  padding: 0 7px 0 4px;
  background: var(--section);
  color: var(--blue);
}

.section svg {
  width: 10px;
  height: 10px;
}

label {
  display: flex;
  align-items: center;
  gap: 8px;
}

input[type="checkbox"] {
  appearance: none;
  width: 13px;
  height: 13px;
  margin: 0;
  border: 1px solid #7c7c7c;
  background: #f2f2f2;
}

.target {
  display: flex;
  gap: 5px;
  height: 192px;
}

.list {
  flex: 1;
  min-width: 0;
  margin: 1px 0 1px 1px;
  display: grid;
  grid-template: 1fr 15px / 1fr 15px;
  border: 1px solid #7c7c7c;
  background: #b4b4b4;
}

.list-view {
  overflow: hidden;
  background: #f0f0f0;
}

.list table {
  border-collapse: collapse;
}

.list tr {
  height: 22px;
}

.list tr:nth-child(odd) {
  background: #e2e6f0;
}

.list td {
  padding: 0 0 3px;
  white-space: nowrap;
}

.list td:nth-child(1) {
  min-width: 26px;
  padding-right: 5px;
  text-align: right;
  border-right: 1px solid #d2d8e2;
}

.list td:nth-child(2) {
  min-width: 25px;
  padding: 2px 6px 0;
  border-right: 1px solid #d2d8e2;
}

.list td:nth-child(2) svg {
  width: 12px;
  height: 10px;
}

.list td:nth-child(3) {
  display: flex;
  align-items: center;
  gap: 8px;
  height: 22px;
  width: 340px;
  padding-left: 7px;
}

.list td:nth-child(3) svg {
  width: 12px;
  height: 16px;
  margin-top: 3px;
}

.thumb {
  border: 2px solid #999;
  background: #d4d4d4;
}

.vscroll {
  display: flex;
  flex-direction: column;
  align-items: center;
  justify-content: flex-end;
  gap: 11px;
  padding-bottom: 6px;
  color: #111;
}

.vscroll .thumb {
  width: 14px;
  height: 80px;
  margin-bottom: -4px;
}

.vscroll svg {
  width: 8px;
  height: 6px;
}

.hscroll {
  display: flex;
  align-items: center;
  gap: 11px;
}

.hscroll .thumb {
  width: 300px;
  height: 15px;
  margin-right: 9px;
}

.hscroll svg {
  width: 6px;
  height: 10px;
}

.actions {
  width: 116px;
  display: flex;
  flex-direction: column;
  gap: 4px;
}

.actions button {
  height: 21px;
  padding-top: 1px;
  border: 1px solid #7c7c7c;
  background: linear-gradient(#ececec, #c9c9c9);
}

.actions button:disabled {
  background: #c6c6c6;
  color: #8c8c8c;
}

.actions label {
  gap: 6px;
}

.dialog-foot {
  display: flex;
  align-items: center;
  gap: 13px;
  height: 24px;
  padding: 0 9px 1px 9px;
  background: var(--section);
  color: var(--blue);
}

.dialog-foot svg {
  width: 12px;
  height: 12px;
}

.fill {
  flex: 1;
}

/* Status bar */
.statusbar {
  display: flex;
  align-items: center;
  height: 33px;
  flex: none;
  background: var(--panel);
  color: #333;
}

.view {
  width: 275px;
  height: 20px;
  margin: 0 4px 0 2px;
}

.view select {
  padding-left: 5px;
  font: 12px "DejaVu Sans Mono", monospace;
  color: #111;
}

.view .combo-arrow {
  color: #111;
}

.view-button {
  width: 20px;
  height: 20px;
  margin-right: 6px;
  display: flex;
  align-items: center;
  justify-content: center;
  border: 1px solid #7c7c7c;
  background: #fff;
}

.view-button svg {
  width: 12px;
  height: 12px;
}

.spaces {
  display: flex;
  gap: 4px;
  margin: 0 2px;
}

.spaces button {
  width: 19px;
  height: 19px;
  border: 1px solid #333;
  background: linear-gradient(#444, #777 35%, #2e2e2e);
}

.spaces .active {
  border-color: #2d4f96;
  background: linear-gradient(#5f92f0, #6fa0fa 30%, #2a55b0);
}

.info {
  width: 176px;
}

.message {
  width: 413px;
  display: flex;
  justify-content: flex-end;
  padding-right: 13px;
}

.message svg {
  width: 9px;
  height: 10px;
}

/* Windows taskbar */
.taskbar {
  display: flex;
  height: 40px;
  flex: none;
  color: #fff;
  background: linear-gradient(90deg, #0a0a0a 38%, #191a0c 44%, #17170a 52%, #17120d 54%, #10120c 58%, #0c150c 62%, #12190c 66%, #0c120a 75%, #171a0b 86%, #0e130b);
  font-family: "Open Sans", sans-serif;
}

.start {
  width: 48px;
  display: flex;
  align-items: center;
  justify-content: center;
}

.start svg {
  width: 16px;
  height: 16px;
}

.search {
  width: 344px;
  display: flex;
  align-items: center;
  gap: 9px;
  padding: 0 15px 0 9px;
  border-top: 1px solid #b5b5b5;
  background: #f2f2f2;
}

.search input {
  flex: 1;
  min-width: 0;
  padding: 0;
  border: none;
  background: none;
  font: 14px "Open Sans", sans-serif;
}

.search input::placeholder {
  color: #333;
}

.cortana {
  width: 22px;
  height: 22px;
}

.mic {
  width: 12px;
  height: 16px;
}

.task {
  width: 48px;
  display: flex;
  align-items: center;
  justify-content: center;
}

.task svg {
  width: 16px;
  height: 16px;
}

.app {
  width: 41px;
  margin: 0 4px;
  border-top: 2px solid transparent;
  border-bottom: 2px solid #76b9ed;
}

.app svg {
  width: 22px;
  height: 22px;
}

.task + .app {
  margin-left: 6px;
}

.app + .app {
  margin-left: 4px;
}

.app.current {
  width: 48px;
  margin-left: 1px;
  background: #3c3c3c;
  border-top-color: #3c3c3c;
}

.tray {
  margin-left: auto;
  padding-right: 25px;
  display: flex;
  align-items: center;
  gap: 8px;
}

.tray svg {
  width: 16px;
  height: 16px;
}

.tray .people {
  margin-right: 12px;
}

.clock {
  width: 58px;
  display: flex;
  flex-direction: column;
  align-items: center;
  font-size: 11px;
  line-height: 18px;
}

.tray .notes {
  margin-left: 8px;
}
```
